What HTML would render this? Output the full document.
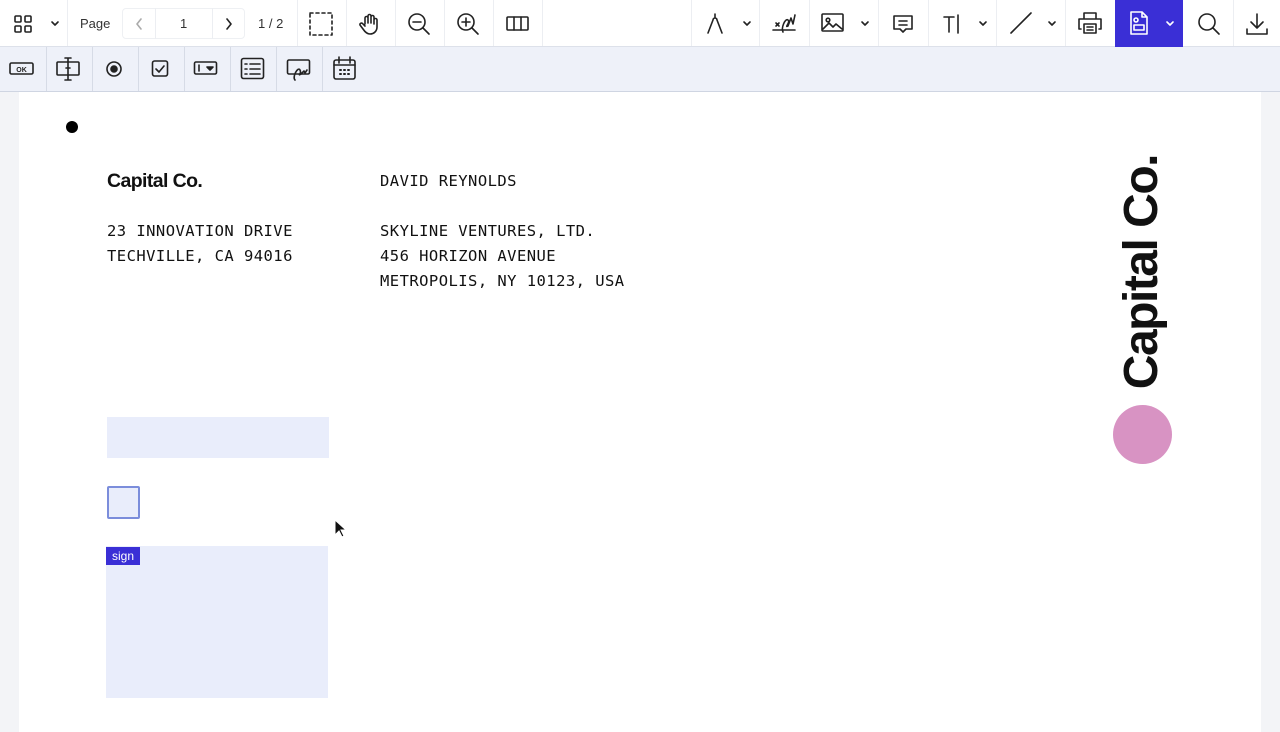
<!DOCTYPE html>
<html><head><meta charset="utf-8"><style>
*{margin:0;padding:0;box-sizing:border-box}
body{width:1280px;height:721px;overflow:hidden;background:#f3f4f7;font-family:"Liberation Sans",sans-serif;position:relative}
.tb{position:absolute;left:0;top:0;width:1280px;height:47px;background:#fff;border-bottom:1px solid #dde1ea}
.tb2{position:absolute;left:0;top:47px;width:1280px;height:45px;background:#eef1f9;border-bottom:1px solid #cfd5e2}
.sep{position:absolute;top:0;width:1px;background:#eceef2}
.tb .sep{height:46px}.tb2 .sep{height:44px;background:#d6dbe6}
svg{position:absolute}
.ic{fill:none;stroke:#222;stroke-width:1.6;stroke-linecap:round;stroke-linejoin:round}
.t{position:absolute;font-size:13px;color:#333}
.page{position:absolute;left:19px;top:92px;width:1242px;height:640px;background:#fff}
.mono{position:absolute;font-family:"DejaVu Sans Mono","Liberation Mono",monospace;font-size:15.5px;color:#111;letter-spacing:0.45px;line-height:25px}
</style></head><body>
<div class="tb">
<svg width="20" height="20" style="left:13px;top:14px" class="ic"><rect x="2" y="2" width="6" height="6" rx="1"/><rect x="12" y="2" width="6" height="6" rx="1"/><rect x="2" y="12" width="6" height="6" rx="1"/><rect x="12" y="12" width="6" height="6" rx="1"/></svg>
<svg width="10" height="10" style="left:50px;top:19px" class="ic"><path d="M2 3l3 3 3-3"/></svg>
<div class="sep" style="left:67px"></div>
<div class="t" style="left:80px;top:16px">Page</div>
<div style="position:absolute;left:122px;top:8px;width:123px;height:31px;border:1px solid #eef0f3;border-radius:4px"></div>
<div class="sep" style="left:155px;top:8px;height:31px"></div><div class="sep" style="left:212px;top:8px;height:31px"></div>
<svg width="10" height="12" style="left:134px;top:18px" class="ic" stroke="#aaa"><path d="M7 1L3 6l4 5" stroke="#aaa"/></svg>
<div class="t" style="left:180px;top:16px">1</div>
<svg width="10" height="12" style="left:224px;top:18px" class="ic"><path d="M3 1l4 5-4 5"/></svg>
<div class="t" style="left:258px;top:16px">1 / 2</div>
<div class="sep" style="left:297px"></div>
<svg width="26" height="26" style="left:308px;top:11px" class="ic"><rect x="2" y="2" width="22" height="22" stroke-dasharray="3 3"/></svg>
<div class="sep" style="left:346px"></div>
<svg width="24" height="24" style="left:358px;top:12px" class="ic"><path d="M7 12V6a1.5 1.5 0 013 0v5V4a1.5 1.5 0 013 0v7V5a1.5 1.5 0 013 0v7V8a1.5 1.5 0 013 0v7c0 4-3 7-7 7-3 0-5-2-7-5l-3-4a1.5 1.5 0 012.5-1.5L7 14"/></svg>
<div class="sep" style="left:395px"></div>
<svg width="24" height="24" style="left:407px;top:12px" class="ic"><circle cx="10" cy="10" r="8"/><path d="M16 16l6 6M6 10h8"/></svg>
<div class="sep" style="left:444px"></div>
<svg width="24" height="24" style="left:456px;top:12px" class="ic"><circle cx="10" cy="10" r="8"/><path d="M16 16l6 6M6 10h8M10 6v8"/></svg>
<div class="sep" style="left:493px"></div>
<svg width="24" height="20" style="left:506px;top:14px" class="ic"><rect x="1" y="3" width="21" height="13" rx="1"/><path d="M8 3v13M15 3v13"/></svg>
<div class="sep" style="left:542px"></div>
<div class="sep" style="left:691px"></div>
<svg width="20" height="24" style="left:705px;top:12px" class="ic"><path d="M3 21l5-13a2 2 0 014 0l5 13M10 2v4"/></svg>
<svg width="10" height="10" style="left:742px;top:19px" class="ic"><path d="M2 3l3 3 3-3"/></svg>
<div class="sep" style="left:759px"></div>
<svg width="26" height="24" style="left:771px;top:11px" class="ic"><path d="M2 19h22M5 12l3 3M8 12l-3 3M12 21c-2-4 2-14 5-12s-4 8 0 6l3-8 2 6 2-9"/></svg>
<div class="sep" style="left:809px"></div>
<svg width="26" height="22" style="left:820px;top:12px" class="ic"><rect x="2" y="2" width="21" height="17" rx="1"/><circle cx="8" cy="8" r="1.8"/><path d="M3 17l6-6 4 4 3-3 6 5"/></svg>
<svg width="10" height="10" style="left:860px;top:19px" class="ic"><path d="M2 3l3 3 3-3"/></svg>
<div class="sep" style="left:878px"></div>
<svg width="24" height="24" style="left:891px;top:12px" class="ic"><path d="M3 4h18v13h-6l-3 3-3-3H3z M8 9h8M8 13h8"/></svg>
<div class="sep" style="left:928px"></div>
<svg width="24" height="24" style="left:941px;top:12px" class="ic"><path d="M3 5h10M8 5v15M17 3v18"/></svg>
<svg width="10" height="10" style="left:978px;top:19px" class="ic"><path d="M2 3l3 3 3-3"/></svg>
<div class="sep" style="left:996px"></div>
<svg width="26" height="26" style="left:1008px;top:10px" class="ic"><path d="M3 23L23 3"/></svg>
<svg width="10" height="10" style="left:1047px;top:19px" class="ic"><path d="M2 3l3 3 3-3"/></svg>
<div class="sep" style="left:1065px"></div>
<svg width="26" height="26" style="left:1077px;top:10px" class="ic"><path d="M7 8V3h12v5M4 19H2V9h22v10h-2M7 14h12v9H7z M10 17h6M10 20h6"/></svg>
<div style="position:absolute;left:1115px;top:0;width:68px;height:47px;background:#3a2fd6"></div>
<svg width="22" height="26" style="left:1128px;top:10px" class="ic" stroke="#fff"><path d="M3 2h11l5 5v17H3z M14 2v5h5" stroke="#fff"/><circle cx="8" cy="10" r="2" stroke="#fff"/><rect x="6" y="15" width="10" height="5" stroke="#fff"/></svg>
<svg width="10" height="10" style="left:1165px;top:19px" class="ic"><path d="M2 3l3 3 3-3" stroke="#fff"/></svg>
<svg width="24" height="24" style="left:1197px;top:12px" class="ic"><circle cx="10" cy="10" r="8"/><path d="M16 16l6 6"/></svg>
<div class="sep" style="left:1233px"></div>
<svg width="24" height="24" style="left:1245px;top:12px" class="ic"><path d="M12 2v14M6 10l6 6 6-6M2 17v5h20v-5"/></svg>
</div>
<div class="tb2">
<svg width="26" height="16" style="left:9px;top:14px" class="ic"><rect x="1" y="2" width="23" height="11" rx="1.5"/><text x="12.5" y="11" font-size="7" font-weight="bold" text-anchor="middle" fill="#222" stroke="none" font-family="Liberation Sans">OK</text></svg>
<div class="sep" style="left:46px"></div>
<svg width="26" height="26" style="left:55px;top:9px" class="ic"><rect x="2" y="6" width="22" height="13" rx="1"/><path d="M13 2v22M10 2h6M10 24h6M11 12h4"/></svg>
<div class="sep" style="left:92px"></div>
<svg width="20" height="20" style="left:105px;top:12px" class="ic"><circle cx="9" cy="10" r="7"/><circle cx="9" cy="10" r="3" fill="#222"/></svg>
<div class="sep" style="left:138px"></div>
<svg width="20" height="20" style="left:151px;top:12px" class="ic"><rect x="1.5" y="2" width="15" height="15" rx="2"/><path d="M5 10l3 3 5-6"/></svg>
<div class="sep" style="left:184px"></div>
<svg width="26" height="20" style="left:193px;top:12px" class="ic"><rect x="1.5" y="3" width="22" height="12" rx="1.5"/><path d="M6 6v6"/><path d="M14 8h6l-3 3z" fill="#222"/></svg>
<div class="sep" style="left:230px"></div>
<svg width="26" height="24" style="left:240px;top:10px" class="ic"><rect x="1.5" y="1.5" width="22" height="20" rx="2"/><path d="M5 7h2M10 7h10M5 12h2M10 12h10M5 17h2M10 17h10"/></svg>
<div class="sep" style="left:276px"></div>
<svg width="26" height="24" style="left:286px;top:11px" class="ic"><rect x="1.5" y="2" width="22" height="14" rx="1.5"/><path d="M9 22c-3-3 3-14 5-10s-3 6 1 4l3-3 1 2 2-3"/></svg>
<div class="sep" style="left:322px"></div>
<svg width="26" height="26" style="left:332px;top:9px" class="ic"><rect x="2" y="4" width="21" height="19" rx="2"/><path d="M2 9h21M7 1v6M18 1v6"/><path d="M8 14h1M12 14h1M16 14h1M8 18h1M12 18h1M16 18h1" stroke-width="2"/></svg>
</div>
<div class="page">
<div style="position:absolute;left:47px;top:29px;width:12px;height:12px;border-radius:50%;background:#000"></div>
<div style="position:absolute;left:88px;top:78px;font-size:19.5px;font-weight:bold;letter-spacing:-0.6px;color:#111">Capital Co.</div>
<div class="mono" style="left:88px;top:127px">23 INNOVATION DRIVE<br>TECHVILLE, CA 94016</div>
<div class="mono" style="left:361px;top:77px">DAVID REYNOLDS</div>
<div class="mono" style="left:361px;top:127px">SKYLINE VENTURES, LTD.<br>456 HORIZON AVENUE<br>METROPOLIS, NY 10123, USA</div>
<div style="position:absolute;left:1124px;top:63px;transform-origin:0 0;transform:rotate(-90deg) translate(-236px,0);width:236px;font-size:48px;font-weight:bold;letter-spacing:-1.5px;line-height:46px;color:#111;white-space:nowrap;text-align:right;margin-left:-24px">Capital Co.</div>
<div style="position:absolute;left:1094px;top:313px;width:59px;height:59px;border-radius:50%;background:#d893c3"></div>
<div style="position:absolute;left:88px;top:325px;width:222px;height:41px;background:#e9edfb"></div>
<div style="position:absolute;left:88px;top:394px;width:33px;height:33px;background:#e9edfb;border:2px solid #7b8ddb;border-radius:2px"></div>
<div style="position:absolute;left:87px;top:454px;width:222px;height:152px;background:#e9edfb"></div>
<div style="position:absolute;left:87px;top:455px;width:34px;height:18px;background:#3a2fd6;color:#fff;font-size:12px;text-align:center;line-height:18px">sign</div>
<svg width="14" height="20" style="left:315px;top:427px"><path d="M1 1v15l4-4 3 6 2-1-3-6h5z" fill="#111" stroke="#fff" stroke-width="1"/></svg>
</div>
</body></html>
